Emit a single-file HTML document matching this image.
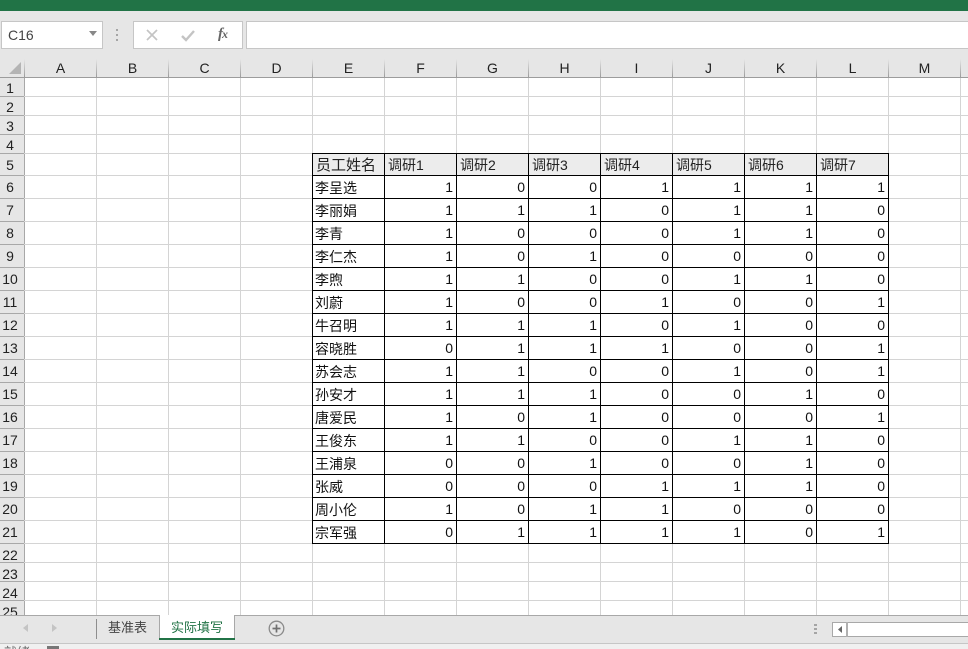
<!DOCTYPE html>
<html lang="zh">
<head>
<meta charset="utf-8">
<title>Excel</title>
<style>
html,body{margin:0;padding:0}
body{width:968px;height:649px;overflow:hidden;position:relative;background:#fff;font-family:"Liberation Sans","Noto Sans CJK SC",sans-serif;color:#000}
div,svg,table{position:absolute}
.h{left:0;width:968px;height:1px;background:#d4d4d4}
.v{top:78px;width:1px;height:537px;background:#d4d4d4}
.box{background:#fff;border:1px solid #c6c6c6;box-sizing:border-box}
.c{top:60px;width:71px;height:17px;line-height:17px;text-align:center;font-size:14px;color:#222}
.cs{top:59px;width:1px;height:18px;background:linear-gradient(#e6e6e6,#9c9c9c)}
.r{left:0;width:20px;text-align:center;font-size:14px;line-height:18px;height:18px;color:#222}
.rs{left:0;width:24px;height:1px;background:#a8a8a8}
table{left:312px;top:153px;border-collapse:collapse;table-layout:fixed;width:576px;font-size:14px;background:#fff}
td{border:1px solid #000;padding:0;height:22px;line-height:22px;text-align:right;overflow:hidden;white-space:nowrap;padding-right:3px;box-sizing:border-box;color:#111}
td:first-child{text-align:left;padding:0 0 0 2px}
td span{position:relative;top:1px}
tr.hd td{background:#ececec;text-align:left;padding:0 0 0 3px;height:21px;line-height:21px;color:#222}
tr.hd td:first-child{font-size:15px}
</style>
</head>
<body>
<div style="left:0;top:0;width:968px;height:11px;background:#217346"></div>
<div style="left:0;top:11px;width:968px;height:66px;background:#e6e6e6"></div>

<div class="box" style="left:1px;top:21px;width:102px;height:28px;font-size:14px;line-height:26px;padding-left:6px;color:#444">C16</div>
<svg style="left:89px;top:31px" width="10" height="6"><path d="M0 0H8L4 5Z" fill="#888"/></svg>
<svg style="left:115px;top:29px" width="6" height="12"><path d="M1 0h2v2H1zM1 5h2v2H1zM1 10h2v2H1z" fill="#a5a5a5"/></svg>
<div class="box" style="left:133px;top:21px;width:110px;height:28px"></div>
<svg style="left:146px;top:29px" width="13" height="13"><path d="M1 1L11 11M11 1L1 11" stroke="#c4c4c4" stroke-width="1.7" fill="none"/></svg>
<svg style="left:181px;top:29px" width="15" height="13"><path d="M1 7L5 11L13 2" stroke="#c4c4c4" stroke-width="2.4" fill="none"/></svg>
<div style="left:218px;top:26px;font:italic 15px/16px 'Liberation Serif',serif;color:#666;letter-spacing:-1px"><b>f</b><span style="font-size:12px;font-weight:bold">x</span></div>
<div class="box" style="left:246px;top:21px;width:730px;height:28px"></div>

<!-- Gridlines -->
<div class="v" style="left:24px;background:#a8a8a8;height:537px"></div>
<div class="v" style="left:96px"></div><div class="v" style="left:168px"></div><div class="v" style="left:240px"></div><div class="v" style="left:312px"></div><div class="v" style="left:384px"></div><div class="v" style="left:456px"></div><div class="v" style="left:528px"></div><div class="v" style="left:600px"></div><div class="v" style="left:672px"></div><div class="v" style="left:744px"></div><div class="v" style="left:816px"></div><div class="v" style="left:888px"></div><div class="v" style="left:960px"></div>
<div class="h" style="top:96px"></div><div class="h" style="top:115px"></div><div class="h" style="top:134px"></div><div class="h" style="top:153px"></div><div class="h" style="top:175px"></div><div class="h" style="top:198px"></div><div class="h" style="top:221px"></div><div class="h" style="top:244px"></div><div class="h" style="top:267px"></div><div class="h" style="top:290px"></div><div class="h" style="top:313px"></div><div class="h" style="top:336px"></div><div class="h" style="top:359px"></div><div class="h" style="top:382px"></div><div class="h" style="top:405px"></div><div class="h" style="top:428px"></div><div class="h" style="top:451px"></div><div class="h" style="top:474px"></div><div class="h" style="top:497px"></div><div class="h" style="top:520px"></div><div class="h" style="top:543px"></div><div class="h" style="top:562px"></div><div class="h" style="top:581px"></div><div class="h" style="top:600px"></div>

<!-- Row header -->
<div style="left:0;top:78px;width:24px;height:537px;background:#e6e6e6;overflow:hidden">
<div class="rs" style="top:18px"></div><div class="rs" style="top:37px"></div><div class="rs" style="top:56px"></div><div class="rs" style="top:75px"></div><div class="rs" style="top:97px"></div><div class="rs" style="top:120px"></div><div class="rs" style="top:143px"></div><div class="rs" style="top:166px"></div><div class="rs" style="top:189px"></div><div class="rs" style="top:212px"></div><div class="rs" style="top:235px"></div><div class="rs" style="top:258px"></div><div class="rs" style="top:281px"></div><div class="rs" style="top:304px"></div><div class="rs" style="top:327px"></div><div class="rs" style="top:350px"></div><div class="rs" style="top:373px"></div><div class="rs" style="top:396px"></div><div class="rs" style="top:419px"></div><div class="rs" style="top:442px"></div><div class="rs" style="top:465px"></div><div class="rs" style="top:484px"></div><div class="rs" style="top:503px"></div><div class="rs" style="top:522px"></div>
<div class="r" style="top:1px">1</div><div class="r" style="top:20px">2</div><div class="r" style="top:39px">3</div><div class="r" style="top:58px">4</div><div class="r" style="top:78px">5</div><div class="r" style="top:100px">6</div><div class="r" style="top:123px">7</div><div class="r" style="top:146px">8</div><div class="r" style="top:169px">9</div><div class="r" style="top:192px">10</div><div class="r" style="top:215px">11</div><div class="r" style="top:238px">12</div><div class="r" style="top:261px">13</div><div class="r" style="top:284px">14</div><div class="r" style="top:307px">15</div><div class="r" style="top:330px">16</div><div class="r" style="top:353px">17</div><div class="r" style="top:376px">18</div><div class="r" style="top:399px">19</div><div class="r" style="top:422px">20</div><div class="r" style="top:445px">21</div><div class="r" style="top:468px">22</div><div class="r" style="top:487px">23</div><div class="r" style="top:506px">24</div><div class="r" style="top:525px">25</div>
</div>

<!-- Column header -->
<div style="left:0;top:77px;width:968px;height:1px;background:#9c9c9c"></div>
<svg style="left:9px;top:62px" width="13" height="13"><path d="M12 0V12H0Z" fill="#b4b4b4"/></svg>
<div class="cs" style="left:24px"></div><div class="cs" style="left:96px"></div><div class="cs" style="left:168px"></div><div class="cs" style="left:240px"></div><div class="cs" style="left:312px"></div><div class="cs" style="left:384px"></div><div class="cs" style="left:456px"></div><div class="cs" style="left:528px"></div><div class="cs" style="left:600px"></div><div class="cs" style="left:672px"></div><div class="cs" style="left:744px"></div><div class="cs" style="left:816px"></div><div class="cs" style="left:888px"></div><div class="cs" style="left:960px"></div>
<div class="c" style="left:25px">A</div><div class="c" style="left:97px">B</div><div class="c" style="left:169px">C</div><div class="c" style="left:241px">D</div><div class="c" style="left:313px">E</div><div class="c" style="left:385px">F</div><div class="c" style="left:457px">G</div><div class="c" style="left:529px">H</div><div class="c" style="left:601px">I</div><div class="c" style="left:673px">J</div><div class="c" style="left:745px">K</div><div class="c" style="left:817px">L</div><div class="c" style="left:889px">M</div>

<!-- Data -->
<table>
<colgroup><col style="width:72px"><col style="width:72px"><col style="width:72px"><col style="width:72px"><col style="width:72px"><col style="width:72px"><col style="width:72px"><col style="width:72px"></colgroup>
<tr class="hd"><td><span>员工姓名</span></td><td><span>调研1</span></td><td><span>调研2</span></td><td><span>调研3</span></td><td><span>调研4</span></td><td><span>调研5</span></td><td><span>调研6</span></td><td><span>调研7</span></td></tr>
<tr><td><span>李呈选</span></td><td>1</td><td>0</td><td>0</td><td>1</td><td>1</td><td>1</td><td>1</td></tr>
<tr><td><span>李丽娟</span></td><td>1</td><td>1</td><td>1</td><td>0</td><td>1</td><td>1</td><td>0</td></tr>
<tr><td><span>李青</span></td><td>1</td><td>0</td><td>0</td><td>0</td><td>1</td><td>1</td><td>0</td></tr>
<tr><td><span>李仁杰</span></td><td>1</td><td>0</td><td>1</td><td>0</td><td>0</td><td>0</td><td>0</td></tr>
<tr><td><span>李煦</span></td><td>1</td><td>1</td><td>0</td><td>0</td><td>1</td><td>1</td><td>0</td></tr>
<tr><td><span>刘蔚</span></td><td>1</td><td>0</td><td>0</td><td>1</td><td>0</td><td>0</td><td>1</td></tr>
<tr><td><span>牛召明</span></td><td>1</td><td>1</td><td>1</td><td>0</td><td>1</td><td>0</td><td>0</td></tr>
<tr><td><span>容晓胜</span></td><td>0</td><td>1</td><td>1</td><td>1</td><td>0</td><td>0</td><td>1</td></tr>
<tr><td><span>苏会志</span></td><td>1</td><td>1</td><td>0</td><td>0</td><td>1</td><td>0</td><td>1</td></tr>
<tr><td><span>孙安才</span></td><td>1</td><td>1</td><td>1</td><td>0</td><td>0</td><td>1</td><td>0</td></tr>
<tr><td><span>唐爱民</span></td><td>1</td><td>0</td><td>1</td><td>0</td><td>0</td><td>0</td><td>1</td></tr>
<tr><td><span>王俊东</span></td><td>1</td><td>1</td><td>0</td><td>0</td><td>1</td><td>1</td><td>0</td></tr>
<tr><td><span>王浦泉</span></td><td>0</td><td>0</td><td>1</td><td>0</td><td>0</td><td>1</td><td>0</td></tr>
<tr><td><span>张威</span></td><td>0</td><td>0</td><td>0</td><td>1</td><td>1</td><td>1</td><td>0</td></tr>
<tr><td><span>周小伦</span></td><td>1</td><td>0</td><td>1</td><td>1</td><td>0</td><td>0</td><td>0</td></tr>
<tr><td><span>宗军强</span></td><td>0</td><td>1</td><td>1</td><td>1</td><td>1</td><td>0</td><td>1</td></tr>
</table>

<!-- Tab bar -->
<div style="left:0;top:615px;width:968px;height:28px;background:#e6e6e6;border-top:1px solid #a8a8a8;box-sizing:border-box"></div>
<svg style="left:22px;top:623px" width="8" height="10"><path d="M6 1V9L1 5Z" fill="#c4c4c4"/></svg>
<svg style="left:51px;top:623px" width="8" height="10"><path d="M1 1V9L6 5Z" fill="#c4c4c4"/></svg>
<div style="left:96px;top:619px;width:1px;height:20px;background:#8e8e8e"></div>
<div style="left:108px;top:618px;font-size:13px;line-height:19px;color:#444">基准表</div>
<div style="left:159px;top:615px;width:76px;height:25px;background:#fff;border-left:1px solid #a8a8a8;border-right:1px solid #a8a8a8;box-sizing:border-box"></div>
<div style="left:159px;top:638px;width:76px;height:2px;background:#217346"></div>
<div style="left:171px;top:618px;font-size:13px;line-height:19px;color:#217346">实际填写</div>
<svg style="left:268px;top:620px" width="17" height="17"><circle cx="8.5" cy="8.5" r="7.3" fill="none" stroke="#8a8a8a" stroke-width="1.3"/><path d="M8.5 4.5V12.5M4.5 8.5H12.5" stroke="#707070" stroke-width="1.7"/></svg>
<svg style="left:814px;top:624px" width="4" height="11"><path d="M0 0h3v2H0zM0 4h3v2H0zM0 8h3v2H0z" fill="#a5a5a5"/></svg>
<div style="left:832px;top:622px;width:140px;height:15px;background:#fff;border:1px solid #a8a8a8;box-sizing:border-box"></div>
<div style="left:846px;top:622px;width:2px;height:15px;background:#b0b0b0"></div>
<svg style="left:837px;top:626px" width="6" height="8"><path d="M5 0V7L1 3.5Z" fill="#666"/></svg>

<!-- Status bar -->
<div style="left:0;top:643px;width:968px;height:6px;background:#f0f0f0;border-top:1px solid #c6c6c6;box-sizing:border-box;overflow:hidden"></div>
<div style="left:0;top:644px;width:100px;height:5px;overflow:hidden"><div style="left:4px;top:1px;font-size:13px;line-height:15px;color:#666;white-space:nowrap">就绪</div><div style="left:47px;top:2px;width:12px;height:6px;background:#777"></div></div>
</body>
</html>
